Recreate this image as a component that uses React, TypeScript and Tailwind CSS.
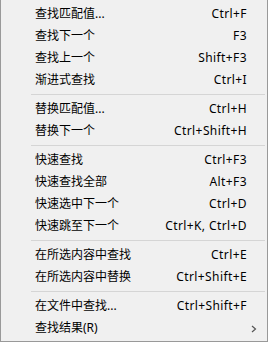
import React from 'react';

type Item =
  | { type: 'item'; label: string; shortcut?: string; submenu?: boolean }
  | { type: 'sep' };

const items: Item[] = [
  { type: 'item', label: '查找匹配值...', shortcut: 'Ctrl+F' },
  { type: 'item', label: '查找下一个', shortcut: 'F3' },
  { type: 'item', label: '查找上一个', shortcut: 'Shift+F3' },
  { type: 'item', label: '渐进式查找', shortcut: 'Ctrl+I' },
  { type: 'sep' },
  { type: 'item', label: '替换匹配值...', shortcut: 'Ctrl+H' },
  { type: 'item', label: '替换下一个', shortcut: 'Ctrl+Shift+H' },
  { type: 'sep' },
  { type: 'item', label: '快速查找', shortcut: 'Ctrl+F3' },
  { type: 'item', label: '快速查找全部', shortcut: 'Alt+F3' },
  { type: 'item', label: '快速选中下一个', shortcut: 'Ctrl+D' },
  { type: 'item', label: '快速跳至下一个', shortcut: 'Ctrl+K, Ctrl+D' },
  { type: 'sep' },
  { type: 'item', label: '在所选内容中查找', shortcut: 'Ctrl+E' },
  { type: 'item', label: '在所选内容中替换', shortcut: 'Ctrl+Shift+E' },
  { type: 'sep' },
  { type: 'item', label: '在文件中查找...', shortcut: 'Ctrl+Shift+F' },
  { type: 'item', label: '查找结果(R)', submenu: true },
];

const MenuRow = ({ label, shortcut, submenu }: { label: string; shortcut?: string; submenu?: boolean }) => (
  <div className="flex h-[22px] items-center pl-[34px] text-[12px] leading-none text-black">
    <span className="flex-1 whitespace-nowrap">{label}</span>
    {shortcut && <span className="whitespace-nowrap tracking-[0.4px]">{shortcut}</span>}
    <span className="flex w-[20px] items-center pl-[4px]">
      {submenu && (
        <svg width="6" height="8" viewBox="0 0 6 8" className="mt-[2px]">
          <polyline points="1,1 4.5,4 1,7" fill="none" stroke="#555" strokeWidth="1.2" />
        </svg>
      )}
    </span>
  </div>
);

export default function App() {
  return (
    <div
      className="flex h-[342px] w-[268px] flex-col border-x border-b border-[#999999] bg-[#f0f0f0] pt-[3px] pb-[2px]"
      style={{ fontFamily: '"Noto Sans", "Noto Sans CJK SC", sans-serif' }}
    >
      {items.map((it, i) =>
        it.type === 'sep' ? (
          <div key={i} className="flex h-[7px] items-center pl-[30px] pr-[2px]">
            <div className="h-px w-full bg-[#d5d5d5]" />
          </div>
        ) : (
          <MenuRow key={i} label={it.label} shortcut={it.shortcut} submenu={it.submenu} />
        )
      )}
    </div>
  );
}
